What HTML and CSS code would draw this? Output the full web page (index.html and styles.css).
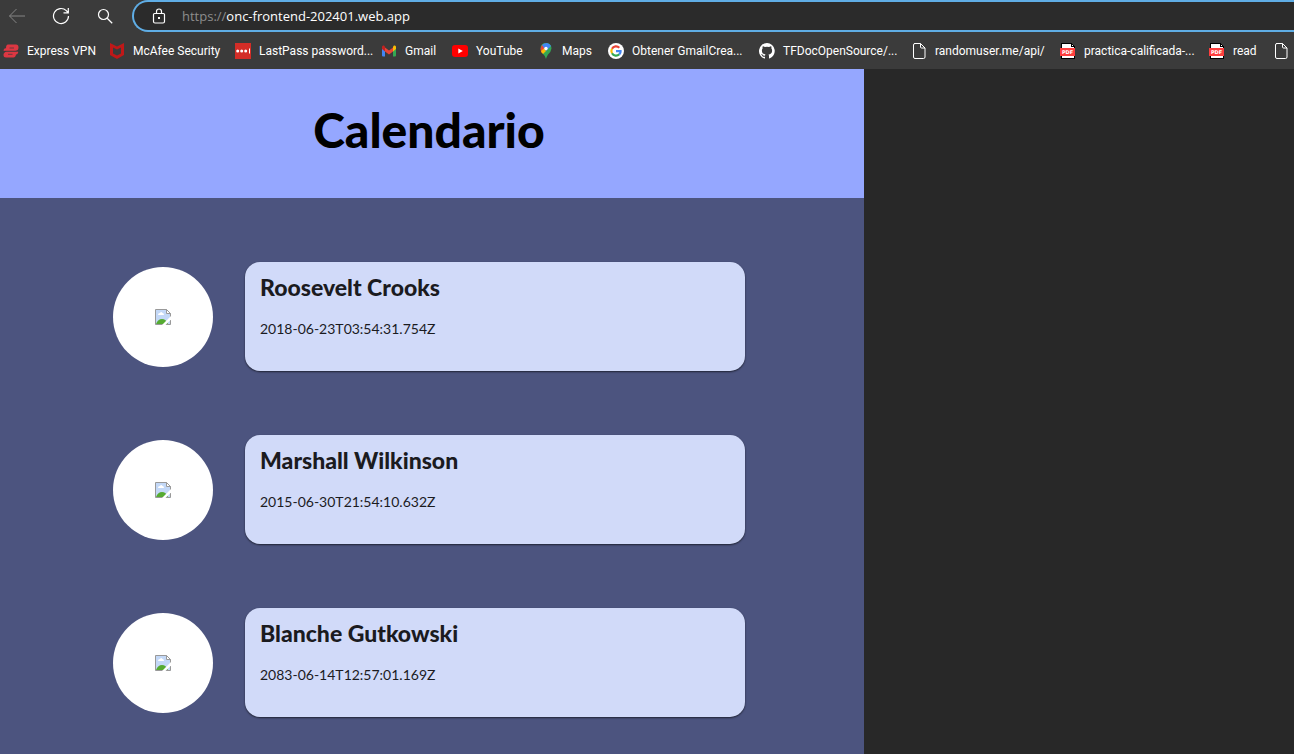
FILE: index.html
```html
<!DOCTYPE html>
<html lang="es">
<head>
<meta charset="utf-8">
<title>Calendario</title>
<link rel="stylesheet" href="styles.css">
</head>
<body>
<svg class="defs" aria-hidden="true">
  <symbol id="page" viewBox="0 0 16 16"><path d="M3.500.5H9.500l4.500 4.500v9q0 1.500-1.500 1.500H4q-1.500 0-1.500-1.500V2q0-1.500 1.500-1.500zM9.500.5V4q0 1 1 1H14" fill="none" stroke="#fff"/></symbol>
  <symbol id="broken" viewBox="0 0 16 16"><path d="M.5.5h11l4 4v11H.5z" fill="#c3d8f7" stroke="#999"/><path d="M11.500.5v4h4z" fill="#fff" stroke="#999"/><path d="M3 6q0-2 2-2 1-2 2.500 0Q9 4 9 6z" fill="#fff"/><path d="M1 15q2-5 6-5 4 0 6 5z" fill="#56ab32"/><path d="M7 16l9-9v3.500L10.500 16z" fill="#fff"/></symbol>
</svg>

<header class="browser">
  <div class="toolbar">
    <nav class="tools" aria-label="Navegador">
      <button class="tool" aria-label="Atrás"><svg viewBox="0 0 18 18"><path d="M17 9H1.500M8.500 2L1.500 9l7 7" fill="none" stroke="#858585"/></svg></button>
      <button class="tool" aria-label="Recargar"><svg viewBox="0 0 18 18"><path d="M16.500 9a7.500 7.500 0 1 1-2.200-5.300L16 5.500M16.300 1v4.800h-4.800" fill="none" stroke="#fff" stroke-width="1.200"/></svg></button>
      <button class="tool" aria-label="Buscar"><svg viewBox="0 0 18 18"><circle cx="7.500" cy="7.500" r="5" fill="none" stroke="#fff" stroke-width="1.200"/><path d="M11.200 11.200l5 5" stroke="#fff" stroke-width="1.300"/></svg></button>
    </nav>
    <div class="address">
      <svg class="lock" viewBox="0 0 16 16"><path d="M3.500 5.500h9q1 0 1 1v7q0 1.500-1.500 1.500H4q-1.500 0-1.500-1.500v-7q0-1 1-1zM5.500 5.500V3.500q0-2.500 2.500-2.500t2.500 2.500v2" fill="none" stroke="#fff" stroke-width="1.200"/><path d="M7 9h2v2H7z" fill="#fff"/></svg>
      <label class="scheme" for="url">https://</label><input class="url" id="url" type="text" value="onc-frontend-202401.web.app">
    </div>
  </div>
  <nav class="bookmarks" aria-label="Marcadores">
    <a class="bookmark" href="#"><svg viewBox="0 0 16 16"><path d="M5 1.500h8q2.500 0 2.500 3t-3 3.500H1.500Q0 8 .8 6.500T3 5.200h3.500H3Q3 1.500 5 1.500z" fill="#dd3742"/><path d="M3.500 8.500h11q1.200 0 .5 1.500t-2 1.500q-.5 3-2.500 3H3Q.5 14.500.5 12t3-3.500z" fill="#dd3742"/><path d="M6.500 5H11M5 11.300h4.500M1.500 8.200h13" stroke="#3b3b3b" stroke-width=".7"/></svg>Express VPN</a>
    <a class="bookmark" href="#"><svg viewBox="0 0 16 16"><path d="M1 0l7 3.500L15 0v12l-7 4-7-4z" fill="#c01818"/><path d="M4 4.500L8 6.500l4-2v6L8 12.500l-4-2z" fill="#3b3b3b"/></svg>McAfee Security</a>
    <a class="bookmark" href="#"><svg viewBox="0 0 16 16"><path d="M0 0h16v16H0z" fill="#d32d27"/><circle cx="2.700" cy="8" r="1.500" fill="#fff"/><circle cx="6.700" cy="8" r="1.500" fill="#fff"/><circle cx="10.700" cy="8" r="1.500" fill="#fff"/><path d="M14.500 5.500v5" stroke="#fff"/></svg>LastPass password...</a>
    <a class="bookmark" href="#"><svg viewBox="0 0 16 16"><path d="M1 4l3 2v7.500H2q-1 0-1-1z" fill="#4285f4"/><path d="M15 4l-3 2v7.500h2q1 0 1-1z" fill="#34a853"/><path d="M4 4.500l4 3 4-3v4L8 11.500l-4-3z" fill="#ea4335"/><path d="M1 6V4q0-2 2-1.500l1 1v5z" fill="#c5221f"/><path d="M15 6V4q0-2-2-1.500l-1 1v5z" fill="#fbbc04"/></svg>Gmail</a>
    <a class="bookmark" href="#"><svg viewBox="0 0 16 16"><rect y="2" width="16" height="12" rx="3" fill="#f00"/><path d="M6.300 5.500v5l4.500-2.500z" fill="#fff"/></svg>YouTube</a>
    <a class="bookmark" href="#"><svg viewBox="0 0 16 16"><path d="M8 0q5.300 0 5.500 5.500Q13 9 10 11.500 8.500 14 8 16q-.6-3-3-5Q3 9 2.500 5.500 2.700 0 8 0z" fill="#34a853"/><path d="M4 2l5 2-5.500 6q-2-4 .5-8z" fill="#ea4335"/><path d="M3 8l4.500-4 1 3.500L5 11Q3.500 9.500 3 8z" fill="#fbbc04"/><path d="M4 2q2-2 5-2 2.500.5 4 3L8 8 6 5z" fill="#4285f4"/><circle cx="8" cy="5.500" r="1.700" fill="#fff"/></svg>Maps</a>
    <a class="bookmark" href="#"><svg viewBox="0 0 16 16"><circle cx="8" cy="8" r="8" fill="#fff"/><g fill="none" stroke-width="2.200"><path d="M4 5.700A4.600 4.600 0 0 1 11.300 4.700" stroke="#ea4335"/><path d="M4 5.700a4.600 4.600 0 0 0 0 4.600" stroke="#fbbc04"/><path d="M4 10.300a4.600 4.600 0 0 0 7.300 1" stroke="#34a853"/><path d="M11.300 11.300Q12.800 10 12.600 8.200H8" stroke="#4285f4"/></g></svg>Obtener GmailCrea...</a>
    <a class="bookmark" href="#"><svg viewBox="0 0 16 16"><path fill="#fff" d="M8 0a8 8 0 0 0-2.500 15.600c.4.100.5-.2.500-.4v-1.500c-2.200.5-2.700-1-2.700-1-.4-.9-.9-1.200-.9-1.200-.7-.5.1-.5.100-.5.800.1 1.200.8 1.200.8.700 1.300 1.900.9 2.300.7.100-.5.300-.9.500-1.100-1.800-.2-3.600-.9-3.600-4 0-.9.300-1.600.8-2.100-.1-.2-.4-1 .1-2.100 0 0 .7-.2 2.200.8a7.700 7.700 0 0 1 4 0c1.500-1 2.200-.8 2.200-.8.400 1.100.2 1.900.1 2.100.5.600.8 1.300.8 2.100 0 3.100-1.900 3.800-3.700 4 .3.300.6.800.6 1.500v2.200c0 .2.100.5.500.4A8 8 0 0 0 8 0z"/></svg>TFDocOpenSource/...</a>
    <a class="bookmark" href="#"><svg><use href="#page"/></svg>randomuser.me/api/</a>
    <a class="bookmark" href="#"><svg viewBox="0 0 16 16" aria-hidden="true"><path d="M1 0h11v1h1v1h1v1h1v13H1z" fill="#000"/><path d="M2 1h9v3h3v11H2z" fill="#fff"/><path d="M12 2h1v1h-1z" fill="#fff"/><path d="M0 5h15v8H0z" fill="#ff3e3e"/><text class="badge" x="7.500" y="11" text-anchor="middle">PDF</text></svg>practica-calificada-...</a>
    <a class="bookmark" href="#"><svg viewBox="0 0 16 16" aria-hidden="true"><path d="M1 0h11v1h1v1h1v1h1v13H1z" fill="#000"/><path d="M2 1h9v3h3v11H2z" fill="#fff"/><path d="M12 2h1v1h-1z" fill="#fff"/><path d="M0 5h15v8H0z" fill="#ff3e3e"/><text class="badge" x="7.500" y="11" text-anchor="middle">PDF</text></svg>read</a>
    <a class="bookmark" href="#" aria-label="Documento"><svg><use href="#page"/></svg></a>
  </nav>
</header>

<main class="app">
  <header class="banner"><h1 class="title">Calendario</h1></header>
  <ul class="people">
    <li class="person">
      <div class="avatar"><svg role="img" aria-label="Foto"><use href="#broken"/></svg></div>
      <article class="card"><h2 class="name">Roosevelt Crooks</h2><p class="date">2018-06-23T03:54:31.754Z</p></article>
    </li>
    <li class="person">
      <div class="avatar"><svg role="img" aria-label="Foto"><use href="#broken"/></svg></div>
      <article class="card"><h2 class="name">Marshall Wilkinson</h2><p class="date">2015-06-30T21:54:10.632Z</p></article>
    </li>
    <li class="person">
      <div class="avatar"><svg role="img" aria-label="Foto"><use href="#broken"/></svg></div>
      <article class="card"><h2 class="name">Blanche Gutkowski</h2><p class="date">2083-06-14T12:57:01.169Z</p></article>
    </li>
  </ul>
</main>
</body>
</html>
```
FILE: styles.css
```css
* { box-sizing: border-box; }

body {
  margin: 0;
  min-height: 100vh;
  display: flex;
  flex-direction: column;
  overflow: hidden;
  background: #282828;
  font-family: Lato, sans-serif;
}

.defs { display: none; }

.browser {
  background: #3b3b3b;
  color: #fff;
}

.toolbar { display: flex; height: 32px; }

.tools {
  display: flex;
  align-items: center;
  gap: 26px;
  padding: 0 18px 0 8px;
}

.tool {
  width: 18px;
  height: 18px;
  padding: 0;
  border: 0;
  background: none;
}

.tool svg { display: block; width: 18px; height: 18px; }

.address {
  flex: 1;
  display: flex;
  align-items: center;
  border: 2px solid #5fade5;
  border-right: 0;
  border-radius: 16px 0 0 16px;
  background: #2b2b2b;
  padding-left: 17px;
  font-family: "Open Sans", "Noto Sans", sans-serif;
  font-size: 13px;
}

.lock { width: 16px; height: 16px; margin-right: 15px; }

.scheme { color: #8d8d8d; }

.url {
  flex: 1;
  padding: 0;
  border: 0;
  outline: 0;
  background: none;
  color: #fff;
  font: inherit;
}

.bookmarks {
  display: grid;
  grid-template-columns: 106px 126px 146px 71px 86px 70px 151px 152px 149px 149px 64px 16px;
  align-items: center;
  height: 37px;
  padding-left: 3px;
  overflow: hidden;
  font-family: Roboto, sans-serif;
  font-size: 12px;
}

.bookmark {
  display: flex;
  align-items: center;
  gap: 8px;
  color: #fff;
  text-decoration: none;
  white-space: nowrap;
}

.bookmark svg { flex: none; width: 16px; height: 16px; }

.badge {
  fill: #fff;
  font: bold 5px "DejaVu Sans", sans-serif;
}

.app {
  flex: 1;
  width: 100%;
  max-width: 864px;
  background: #4c547f;
}

.banner {
  padding: 31px 6px 38px 0;
  background: #95a7ff;
  text-align: center;
}

.title {
  margin: 0;
  color: #000;
  font-size: 48px;
  font-weight: 900;
  line-height: 60px;
}

.people {
  display: flex;
  flex-direction: column;
  gap: 64px;
  margin: 0;
  padding: 64px 6px 37px 0;
  list-style: none;
}

.person {
  display: flex;
  align-items: center;
  justify-content: center;
  gap: 32px;
}

.avatar {
  display: grid;
  place-items: center;
  width: 100px;
  height: 100px;
  border-radius: 50%;
  background: #fff;
}

.avatar svg { width: 16px; height: 16px; }

.card {
  flex: 0 1 500px;
  padding: 9px 15px 32px;
  border-radius: 15px;
  background: #d1daf9;
  box-shadow: 0 1px 2px rgba(0, 0, 0, 0.6);
  color: #1b1b1f;
}

.name {
  margin: 0;
  font-size: 23px;
  font-weight: 900;
  line-height: 32px;
}

.date {
  margin: 16px 0 0;
  font-size: 14px;
  line-height: 20px;
}
```
